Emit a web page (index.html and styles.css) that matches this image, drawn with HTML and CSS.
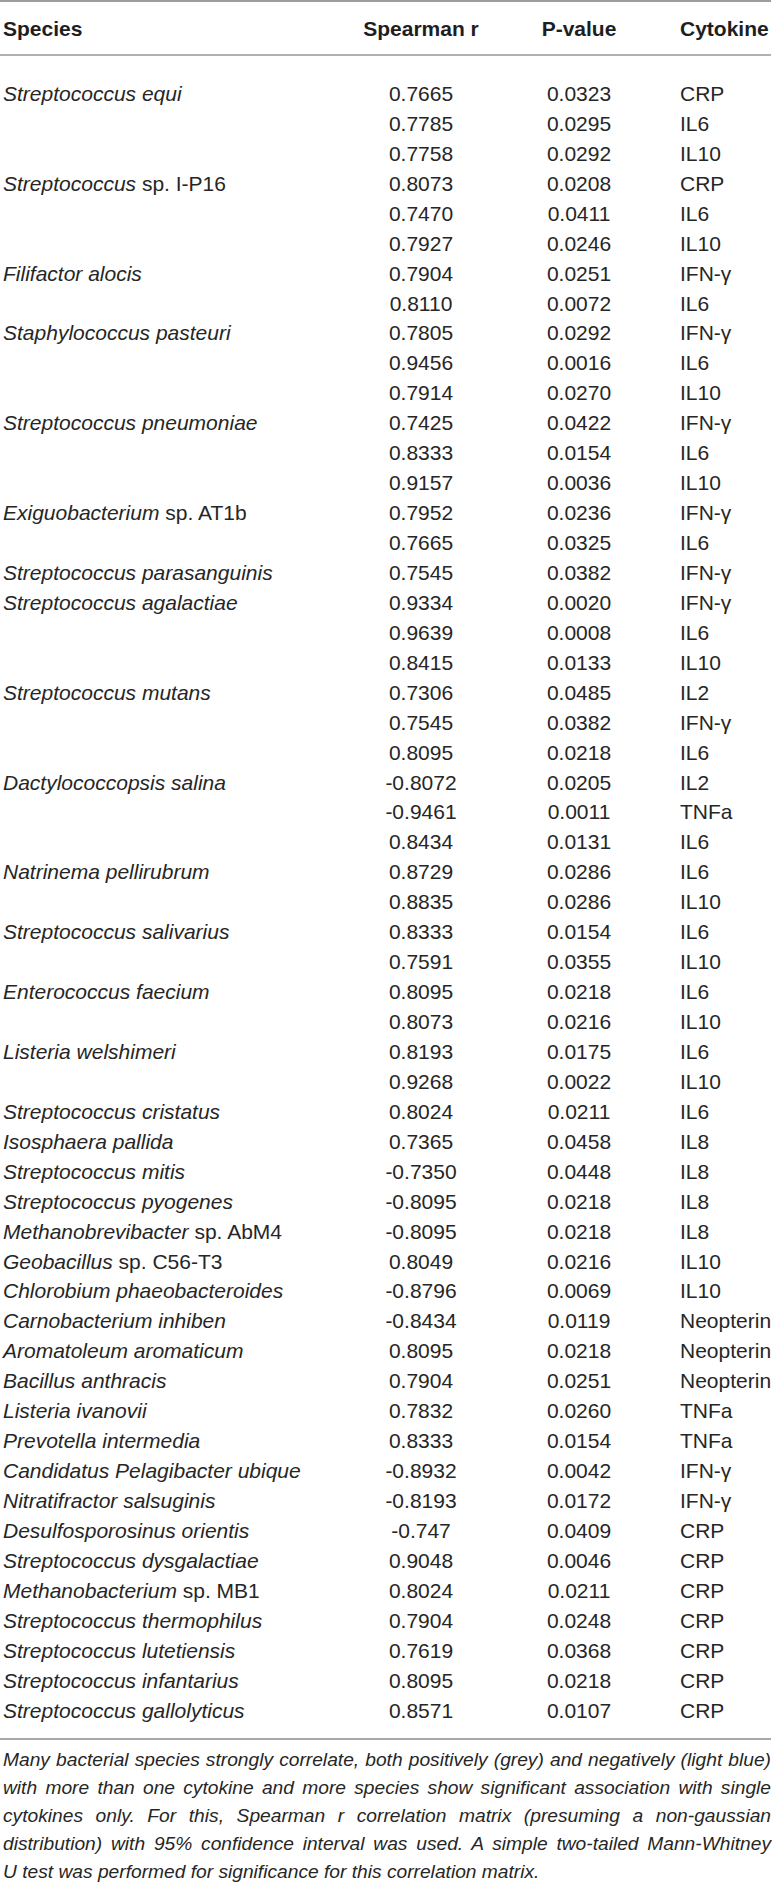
FILE: index.html
```html
<!DOCTYPE html>
<html lang="en">
<head>
<meta charset="utf-8">
<title>Species–cytokine correlations</title>
<link rel="stylesheet" href="styles.css">
</head>
<body>
<div class="wrap">
<table class="corr">
<colgroup>
<col class="c-species"><col class="c-r"><col class="c-p"><col class="c-cyt">
</colgroup>
<thead>
<tr><th class="species">Species</th><th class="num">Spearman r</th><th class="num">P-value</th><th class="cyt">Cytokine</th></tr>
</thead>
<tbody>
<tr class="first"><td class="species"><i>Streptococcus equi</i></td><td class="num">0.7665</td><td class="num">0.0323</td><td class="cyt">CRP</td></tr>
<tr><td class="species"></td><td class="num">0.7785</td><td class="num">0.0295</td><td class="cyt">IL6</td></tr>
<tr><td class="species"></td><td class="num">0.7758</td><td class="num">0.0292</td><td class="cyt">IL10</td></tr>
<tr><td class="species"><i>Streptococcus</i> sp. I-P16</td><td class="num">0.8073</td><td class="num">0.0208</td><td class="cyt">CRP</td></tr>
<tr><td class="species"></td><td class="num">0.7470</td><td class="num">0.0411</td><td class="cyt">IL6</td></tr>
<tr><td class="species"></td><td class="num">0.7927</td><td class="num">0.0246</td><td class="cyt">IL10</td></tr>
<tr><td class="species"><i>Filifactor alocis</i></td><td class="num">0.7904</td><td class="num">0.0251</td><td class="cyt">IFN-γ</td></tr>
<tr><td class="species"></td><td class="num">0.8110</td><td class="num">0.0072</td><td class="cyt">IL6</td></tr>
<tr><td class="species"><i>Staphylococcus pasteuri</i></td><td class="num">0.7805</td><td class="num">0.0292</td><td class="cyt">IFN-γ</td></tr>
<tr><td class="species"></td><td class="num">0.9456</td><td class="num">0.0016</td><td class="cyt">IL6</td></tr>
<tr><td class="species"></td><td class="num">0.7914</td><td class="num">0.0270</td><td class="cyt">IL10</td></tr>
<tr><td class="species"><i>Streptococcus pneumoniae</i></td><td class="num">0.7425</td><td class="num">0.0422</td><td class="cyt">IFN-γ</td></tr>
<tr><td class="species"></td><td class="num">0.8333</td><td class="num">0.0154</td><td class="cyt">IL6</td></tr>
<tr><td class="species"></td><td class="num">0.9157</td><td class="num">0.0036</td><td class="cyt">IL10</td></tr>
<tr><td class="species"><i>Exiguobacterium</i> sp. AT1b</td><td class="num">0.7952</td><td class="num">0.0236</td><td class="cyt">IFN-γ</td></tr>
<tr><td class="species"></td><td class="num">0.7665</td><td class="num">0.0325</td><td class="cyt">IL6</td></tr>
<tr><td class="species"><i>Streptococcus parasanguinis</i></td><td class="num">0.7545</td><td class="num">0.0382</td><td class="cyt">IFN-γ</td></tr>
<tr><td class="species"><i>Streptococcus agalactiae</i></td><td class="num">0.9334</td><td class="num">0.0020</td><td class="cyt">IFN-γ</td></tr>
<tr><td class="species"></td><td class="num">0.9639</td><td class="num">0.0008</td><td class="cyt">IL6</td></tr>
<tr><td class="species"></td><td class="num">0.8415</td><td class="num">0.0133</td><td class="cyt">IL10</td></tr>
<tr><td class="species"><i>Streptococcus mutans</i></td><td class="num">0.7306</td><td class="num">0.0485</td><td class="cyt">IL2</td></tr>
<tr><td class="species"></td><td class="num">0.7545</td><td class="num">0.0382</td><td class="cyt">IFN-γ</td></tr>
<tr><td class="species"></td><td class="num">0.8095</td><td class="num">0.0218</td><td class="cyt">IL6</td></tr>
<tr><td class="species"><i>Dactylococcopsis salina</i></td><td class="num">-0.8072</td><td class="num">0.0205</td><td class="cyt">IL2</td></tr>
<tr><td class="species"></td><td class="num">-0.9461</td><td class="num">0.0011</td><td class="cyt">TNFa</td></tr>
<tr><td class="species"></td><td class="num">0.8434</td><td class="num">0.0131</td><td class="cyt">IL6</td></tr>
<tr><td class="species"><i>Natrinema pellirubrum</i></td><td class="num">0.8729</td><td class="num">0.0286</td><td class="cyt">IL6</td></tr>
<tr><td class="species"></td><td class="num">0.8835</td><td class="num">0.0286</td><td class="cyt">IL10</td></tr>
<tr><td class="species"><i>Streptococcus salivarius</i></td><td class="num">0.8333</td><td class="num">0.0154</td><td class="cyt">IL6</td></tr>
<tr><td class="species"></td><td class="num">0.7591</td><td class="num">0.0355</td><td class="cyt">IL10</td></tr>
<tr><td class="species"><i>Enterococcus faecium</i></td><td class="num">0.8095</td><td class="num">0.0218</td><td class="cyt">IL6</td></tr>
<tr><td class="species"></td><td class="num">0.8073</td><td class="num">0.0216</td><td class="cyt">IL10</td></tr>
<tr><td class="species"><i>Listeria welshimeri</i></td><td class="num">0.8193</td><td class="num">0.0175</td><td class="cyt">IL6</td></tr>
<tr><td class="species"></td><td class="num">0.9268</td><td class="num">0.0022</td><td class="cyt">IL10</td></tr>
<tr><td class="species"><i>Streptococcus cristatus</i></td><td class="num">0.8024</td><td class="num">0.0211</td><td class="cyt">IL6</td></tr>
<tr><td class="species"><i>Isosphaera pallida</i></td><td class="num">0.7365</td><td class="num">0.0458</td><td class="cyt">IL8</td></tr>
<tr><td class="species"><i>Streptococcus mitis</i></td><td class="num">-0.7350</td><td class="num">0.0448</td><td class="cyt">IL8</td></tr>
<tr><td class="species"><i>Streptococcus pyogenes</i></td><td class="num">-0.8095</td><td class="num">0.0218</td><td class="cyt">IL8</td></tr>
<tr><td class="species"><i>Methanobrevibacter</i> sp. AbM4</td><td class="num">-0.8095</td><td class="num">0.0218</td><td class="cyt">IL8</td></tr>
<tr><td class="species"><i>Geobacillus</i> sp. C56-T3</td><td class="num">0.8049</td><td class="num">0.0216</td><td class="cyt">IL10</td></tr>
<tr><td class="species"><i>Chlorobium phaeobacteroides</i></td><td class="num">-0.8796</td><td class="num">0.0069</td><td class="cyt">IL10</td></tr>
<tr><td class="species"><i>Carnobacterium inhiben</i></td><td class="num">-0.8434</td><td class="num">0.0119</td><td class="cyt">Neopterin</td></tr>
<tr><td class="species"><i>Aromatoleum aromaticum</i></td><td class="num">0.8095</td><td class="num">0.0218</td><td class="cyt">Neopterin</td></tr>
<tr><td class="species"><i>Bacillus anthracis</i></td><td class="num">0.7904</td><td class="num">0.0251</td><td class="cyt">Neopterin</td></tr>
<tr><td class="species"><i>Listeria ivanovii</i></td><td class="num">0.7832</td><td class="num">0.0260</td><td class="cyt">TNFa</td></tr>
<tr><td class="species"><i>Prevotella intermedia</i></td><td class="num">0.8333</td><td class="num">0.0154</td><td class="cyt">TNFa</td></tr>
<tr><td class="species"><i>Candidatus Pelagibacter ubique</i></td><td class="num">-0.8932</td><td class="num">0.0042</td><td class="cyt">IFN-γ</td></tr>
<tr><td class="species"><i>Nitratifractor salsuginis</i></td><td class="num">-0.8193</td><td class="num">0.0172</td><td class="cyt">IFN-γ</td></tr>
<tr><td class="species"><i>Desulfosporosinus orientis</i></td><td class="num">-0.747</td><td class="num">0.0409</td><td class="cyt">CRP</td></tr>
<tr><td class="species"><i>Streptococcus dysgalactiae</i></td><td class="num">0.9048</td><td class="num">0.0046</td><td class="cyt">CRP</td></tr>
<tr><td class="species"><i>Methanobacterium</i> sp. MB1</td><td class="num">0.8024</td><td class="num">0.0211</td><td class="cyt">CRP</td></tr>
<tr><td class="species"><i>Streptococcus thermophilus</i></td><td class="num">0.7904</td><td class="num">0.0248</td><td class="cyt">CRP</td></tr>
<tr><td class="species"><i>Streptococcus lutetiensis</i></td><td class="num">0.7619</td><td class="num">0.0368</td><td class="cyt">CRP</td></tr>
<tr><td class="species"><i>Streptococcus infantarius</i></td><td class="num">0.8095</td><td class="num">0.0218</td><td class="cyt">CRP</td></tr>
<tr class="last"><td class="species"><i>Streptococcus gallolyticus</i></td><td class="num">0.8571</td><td class="num">0.0107</td><td class="cyt">CRP</td></tr>
</tbody>
</table>
<p class="caption">Many bacterial species strongly correlate, both positively (grey) and negatively (light blue) with more than one cytokine and more species show significant association with single cytokines only. For this, Spearman r correlation matrix (presuming a non-gaussian distribution) with 95% confidence interval was used. A simple two-tailed Mann-Whitney U&nbsp;test was performed for significance for this correlation matrix.</p>
</div>
</body>
</html>
```
FILE: styles.css
```css
html, body {
  margin: 0;
  padding: 0;
  background: #ffffff;
}
.wrap {
  width: 771px;
  font-family: "Liberation Sans", Arial, Helvetica, sans-serif;
  color: #262626;
}
.corr {
  width: 771px;
  border-collapse: collapse;
  table-layout: fixed;
  font-size: 21px;
  border-top: 2px solid #9c9c9c;
  border-bottom: 2px solid #a8a8a8;
}
.c-species { width: 344px; }
.c-r { width: 154px; }
.c-p { width: 162px; }
.c-cyt { width: 111px; }
.corr th, .corr td {
  padding: 0;
  height: 29.94px;
  line-height: 29.94px;
  white-space: nowrap;
  vertical-align: top;
}
.corr thead th {
  font-weight: bold;
  color: #1e1e1e;
  padding-top: 12px;
  padding-bottom: 10px;
  border-bottom: 2px solid #b0b0b0;
}
.corr .species { text-align: left; padding-left: 3px; }
.corr .num { text-align: center; }
.corr .cyt { text-align: left; padding-left: 20px; }
.corr tbody tr.first td { padding-top: 23px; }
.corr tbody tr.last td { padding-bottom: 12px; }
.corr i { font-style: italic; }
.caption {
  margin: 6px 0 0 0;
  padding: 0 0 0 3px;
  font-size: 19.2px;
  line-height: 28px;
  font-style: italic;
  text-align: justify;
  color: #262626;
}
```
